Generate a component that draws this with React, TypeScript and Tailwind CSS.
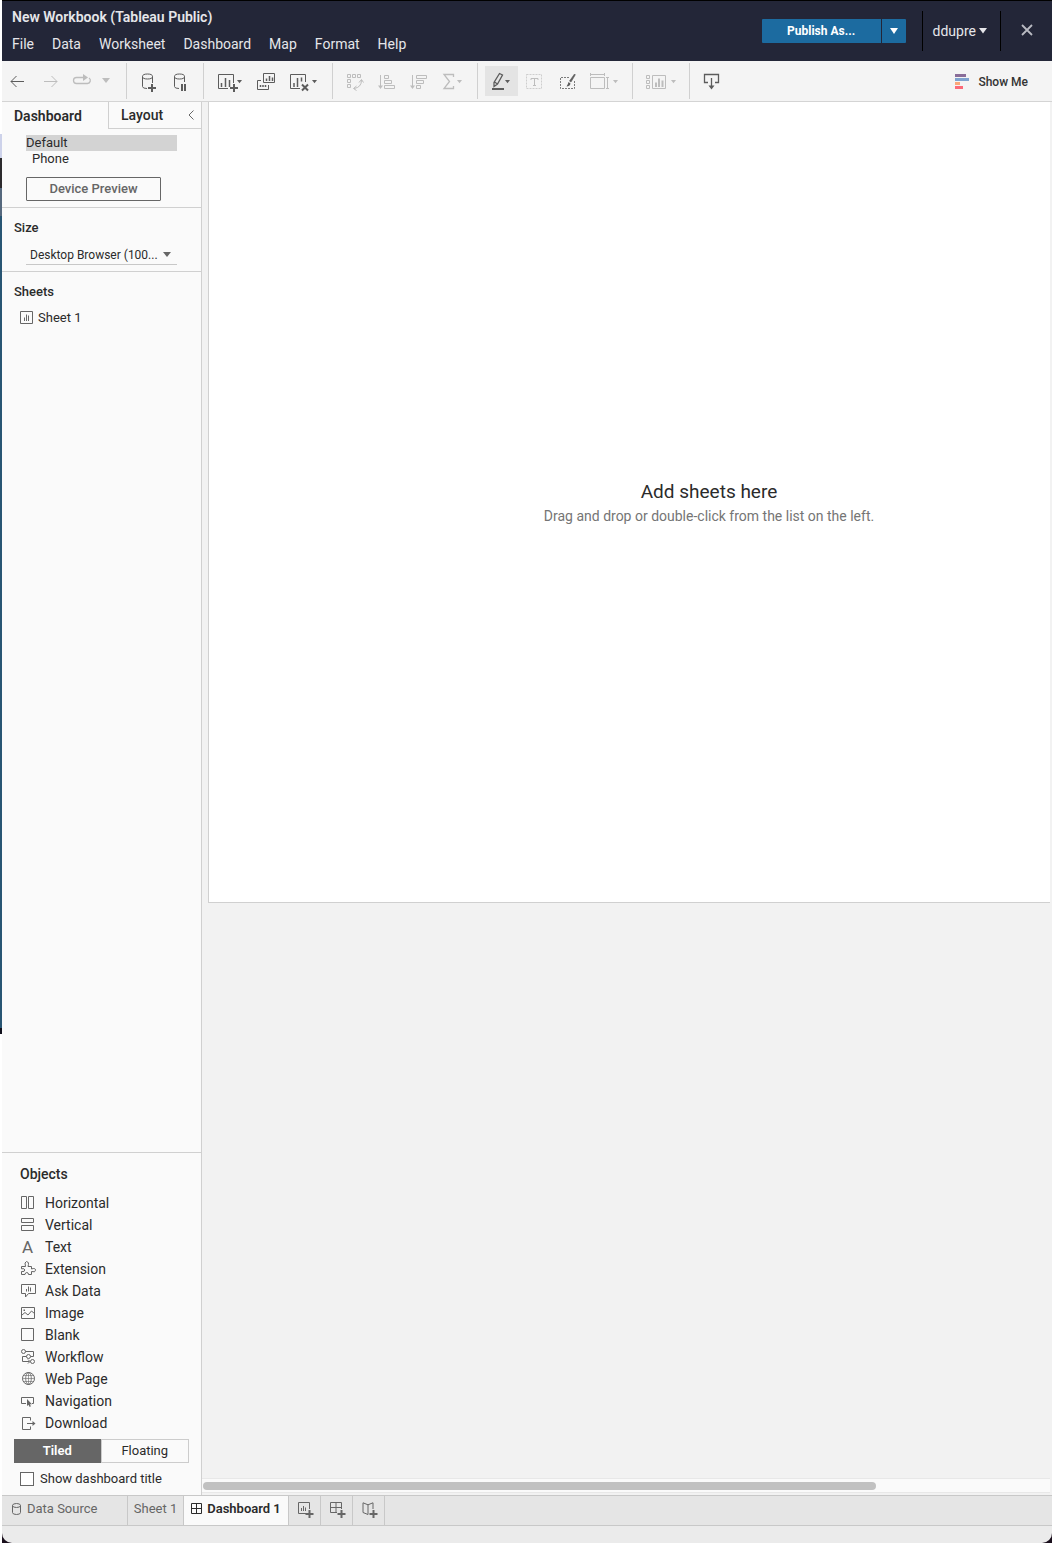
import React, { useState } from "react";

type IconProps = { w?: number; children: React.ReactNode; className?: string };

function Icon({ w = 32, children, className = "" }: IconProps) {
  return (
    <svg
      width={w}
      height={32}
      viewBox={`0 0 ${w} 32`}
      fill="none"
      stroke="currentColor"
      strokeWidth={1}
      aria-hidden="true"
      className={`shrink-0 ${className}`}
    >
      {children}
    </svg>
  );
}

function Caret({ x, y = 16 }: { x: number; y?: number }) {
  return <path d={`M${x} ${y}h5l-2.5 3.2z`} fill="currentColor" stroke="none" />;
}

function Plus({ x, y }: { x: number; y: number }) {
  return <path d={`M${x - 4} ${y}h8M${x} ${y - 4}v8`} strokeWidth={2} />;
}

function Tool({
  label,
  dim = false,
  w = 32,
  className = "",
  children,
}: {
  label: string;
  dim?: boolean;
  w?: number;
  className?: string;
  children: React.ReactNode;
}) {
  return (
    <button
      type="button"
      aria-label={label}
      title={label}
      disabled={dim}
      className={`flex h-[30px] shrink-0 items-center ${dim ? "text-[#bdbdbd]" : "text-[#5c5c5c]"} ${className}`}
    >
      <Icon w={w}>{children}</Icon>
    </button>
  );
}

function Separator() {
  return <div className="h-9 w-px shrink-0 bg-[#d0d0d0]" />;
}

function Header() {
  const menus = ["File", "Data", "Worksheet", "Dashboard", "Map", "Format", "Help"];
  return (
    <header className="flex h-[61px] items-start justify-between border-t border-black bg-[#232638] text-[#e6e6ea]">
      <div className="pl-2.5">
        <h1 className="mt-1.5 text-sm leading-5 font-semibold">New Workbook (Tableau Public)</h1>
        <nav className="mt-[7px] flex gap-[18px] text-sm leading-5">
          {menus.map((m) => (
            <button key={m} type="button">
              {m}
            </button>
          ))}
        </nav>
      </div>
      <div className="flex pt-2.5">
        <div className="mt-2 mr-4 flex h-6 gap-px text-white">
          <button type="button" className="w-[119px] rounded-l-[1px] bg-[#1c6ba0] text-xs font-bold">
            Publish As...
          </button>
          <button
            type="button"
            aria-label="More publish options"
            className="flex w-6 items-center justify-center rounded-r-[1px] bg-[#1c6ba0]"
          >
            <svg width="8" height="6" viewBox="0 0 8 6" fill="currentColor" aria-hidden="true">
              <path d="M0 0h8L4 6z" />
            </svg>
          </button>
        </div>
        <button
          type="button"
          className="flex h-10 items-center gap-[3px] border-x border-black pr-[13px] pl-2.5 text-sm"
        >
          ddupre
          <svg width="8" height="6" viewBox="0 0 8 6" fill="currentColor" aria-hidden="true">
            <path d="M0 0h8L4 5.500z" />
          </svg>
        </button>
        <button type="button" aria-label="Close" className="flex h-[37px] w-[51px] items-center justify-center text-[#b9bac2]">
          <svg width="12" height="12" viewBox="0 0 12 12" fill="none" stroke="currentColor" strokeWidth="1.8" aria-hidden="true">
            <path d="M1 1l10 10M11 1L1 11" />
          </svg>
        </button>
      </div>
    </header>
  );
}

function Toolbar() {
  return (
    <div
      role="toolbar"
      aria-label="Workbook tools"
      className="flex h-[41px] items-center border-b border-[#d4d4d4] bg-[#f4f4f4]"
    >
      <div className="flex items-center pr-3">
        <Tool label="Undo">
          <path d="M9 16.500H22M14.500 11l-5.500 5.500L14.500 22" />
        </Tool>
        <Tool label="Redo" dim>
          <path d="M10 16.500H23M17.500 11l5.500 5.500L17.500 22" />
        </Tool>
        <Tool label="Replay" dim>
          <path d="M18 12.500H10.500a3 3 0 0 0 0 6H21.500a3 3 0 0 0 1.500-5.500" strokeWidth={1.300} />
          <path d="M17 9l5 3.500L17 16z" fill="currentColor" stroke="none" />
        </Tool>
        <Tool label="Replay options" dim w={16}>
          <path d="M4 13h8l-4 5z" fill="currentColor" stroke="none" />
        </Tool>
      </div>
      <Separator />
      <div className="flex px-1.5">
        <Tool label="New data source">
          <ellipse cx="14.500" cy="11.500" rx="5" ry="2.500" />
          <path d="M9.500 11.500V21.500Q9.500 23.500 14 23.500M19.500 11.500V18" />
          <Plus x={19} y={23} />
        </Tool>
        <Tool label="Pause auto updates">
          <ellipse cx="14.500" cy="11.500" rx="5" ry="2.500" />
          <path d="M9.500 11.500V21.500Q9.500 23.500 14 23.500M19.500 11.500V17" />
          <path d="M17 19v7M20 19v7" strokeWidth={2} />
        </Tool>
      </div>
      <Separator />
      <div className="flex gap-1 px-2.5">
        <Tool label="New worksheet">
          <path d="M14 23.500H4.500V9.500H19.500V18" />
          <path d="M7.500 18v4M11.500 13v9M15.500 15v7" strokeWidth={1.500} />
          <Plus x={20} y={23} />
          <Caret x={23} y={15} />
        </Tool>
        <Tool label="Duplicate">
          <path d="M13.500 8.500H24.500V17.500H13.500zM11 15.500H7.500V24.500H18.500V20" />
          <path d="M16.500 13.500V16M19.500 11V16M22.500 12.500V16M10.500 20v2M13 20v2M15.500 20v2" strokeWidth={1.500} />
        </Tool>
        <Tool label="Clear sheet" w={36}>
          <path d="M14 23.500H4.500V9.500H19.500V17" />
          <path d="M8 18v4M11.500 13v9M15.500 12.500v4" strokeWidth={1.500} />
          <path d="M16 19.500l6 6M22 19.500l-6 6" strokeWidth={2} />
          <Caret x={26} y={15} />
        </Tool>
      </div>
      <Separator />
      <div className="flex px-1.5">
        <Tool label="Swap rows and columns" dim>
          <path d="M8.500 9.500h3v3h-3zM13.500 9.500h3v3h-3zM18.500 9.500h3v3h-3zM8.500 14.500h3v3h-3zM8.500 19.500h3v3h-3z" />
          <path d="M22.500 15Q22.500 22.500 15 23.500M20 17.500l2.500-3 2 3M17.500 21l-3 2.500 3 2" />
        </Tool>
        <Tool label="Sort ascending" dim>
          <path d="M9.500 10V23" />
          <path d="M7 20.500h5l-2.500 3.500z" fill="currentColor" stroke="none" />
          <path d="M13.500 10.500h4v3h-4zM13.500 15.500h7v3h-7zM13.500 20.500h10v3h-10z" />
        </Tool>
        <Tool label="Sort descending" dim>
          <path d="M9.500 10V23" />
          <path d="M7 20.500h5l-2.500 3.500z" fill="currentColor" stroke="none" />
          <path d="M13.500 10.500h10v3h-10zM13.500 15.500h7v3h-7zM13.500 20.500h4v3h-4z" />
        </Tool>
        <Tool label="Totals" dim w={36}>
          <path d="M18.500 12V9.500H9L14.500 16.500 9 23.500H18.500V21" strokeWidth={1.300} />
          <Caret x={22} y={15} />
        </Tool>
      </div>
      <Separator />
      <div className="flex gap-px px-[7px]">
        <Tool label="Highlight" className="w-[33px] bg-[#e4e4e4]">
          <path d="M7 24h12" strokeWidth={2} />
          <path d="M14.500 8.500l3 1.500-5 9-3.500 2.500v-4zM9.500 17l3 2" strokeWidth={1.300} />
          <Caret x={20} y={15} />
        </Tool>
        <Tool label="Show mark labels" dim>
          <path d="M7.500 9.500h15v14h-15z" strokeDasharray="2 1" opacity={0.700} />
          <path d="M12 15v-1.500h7V15M15.500 13.500v7M14 20.500h3" />
        </Tool>
        <Tool label="Format">
          <path d="M17 12.500H8.500V23.500H22.500V16" strokeDasharray="2 1" strokeWidth={0.800} />
          <path d="M22.500 9l.8.8-4.300 7.200-1.500-1z" fill="currentColor" strokeWidth={0.600} />
          <path d="M16.500 17l2 1.500q-.5 3-4 3 1.500-2 2-4.500z" fill="currentColor" stroke="none" />
        </Tool>
        <Tool label="Fit" dim w={40}>
          <path d="M5.500 12.500h14v11h-14zM5.500 9.500h14M5.500 8v3M19.500 8v3M22.500 12.500v11M21 12.500h3M21 23.500h3" />
          <Caret x={28} y={15} />
        </Tool>
      </div>
      <Separator />
      <div className="flex pr-1.5 pl-2.5">
        <Tool label="Show or hide cards" dim w={40}>
          <path d="M3.500 10.500h3v3h-3zM3.500 15.500h3v3h-3zM3.500 20.500h3v3h-3zM9.500 10.500h13v13h-13z" />
          <path d="M13 17.500v4.500M16 13.500v8.500M19.500 15.500v6.500" strokeWidth={2} />
          <Caret x={28} y={15} />
        </Tool>
      </div>
      <Separator />
      <div className="flex px-1.5">
        <Tool label="Download">
          <path d="M12 17.500H8.500V9.500H22.500V17.500H19M15.500 13V22" strokeWidth={1.300} />
          <path d="M12.500 20.500h6l-3 4z" fill="currentColor" stroke="none" />
        </Tool>
      </div>
      <button type="button" className="mt-px mr-6 ml-auto flex items-center gap-[9px] text-xs font-medium text-[#333]">
        <svg width="14" height="15" viewBox="0 0 14 15" aria-hidden="true">
          <path d="M0 0h11v3H0z" fill="#8a6d99" />
          <path d="M0 4h14v3H0z" fill="#7fa3cf" />
          <path d="M0 8h5v3H0z" fill="#fba77a" />
          <path d="M0 12h8v3H0z" fill="#fb6a78" />
        </svg>
        Show Me
      </button>
    </div>
  );
}

const objects: { name: string; icon: React.ReactNode }[] = [
  { name: "Horizontal", icon: <path d="M1.500 4.500h5v12h-5zM8.500 4.500h5v12h-5z" /> },
  { name: "Vertical", icon: <path d="M1.500 4.500h12v4h-12zM1.500 11.500h12v5h-12z" /> },
  {
    name: "Text",
    icon: (
      <text x="7.500" y="17" fontSize="17" textAnchor="middle" fill="currentColor" stroke="none">
        A
      </text>
    ),
  },
  {
    name: "Extension",
    icon: (
      <path d="M1.500 8.500h4Q4 4 6.500 3.500 9.500 4 8 8.500h3.500v2.500q4-1.500 4 1.200 0 2.500-4 1.300v3H8.500q0-2-1.700-2T5 16.500H1.500V13.500Q5 14 4.800 12 4.500 10 1.500 10.800z" />
    ),
  },
  {
    name: "Ask Data",
    icon: <path d="M1.500 4.500h14v9H8.500l-3 3.500v-3.500h-4zM6.500 9v2.500M8.500 6.500v5M10.500 7.500v4" />,
  },
  {
    name: "Image",
    icon: (
      <>
        <path d="M1.500 5.500h13v11h-13zM2 13l3-2.500 3 2.500 3.500-4 3 2.500" />
        <path d="M3.500 7.500h1.500v1.500H3.500z" fill="currentColor" stroke="none" />
      </>
    ),
  },
  { name: "Blank", icon: <path d="M1.500 4.500h12v12h-12z" /> },
  {
    name: "Workflow",
    icon: (
      <>
        <circle cx="3.500" cy="5.500" r="2" />
        <circle cx="8.500" cy="10.500" r="2" />
        <circle cx="12.500" cy="15.500" r="2" />
        <path d="M5.500 5.500h8v5h-3M6.500 10.500h-4v5h7M8 13.500l2 2-2 2" />
      </>
    ),
  },
  {
    name: "Web Page",
    icon: (
      <>
        <circle cx="8.500" cy="10.500" r="6" />
        <ellipse cx="8.500" cy="10.500" rx="2.800" ry="6" strokeWidth={0.800} />
        <path d="M2.500 10.500h12M8.500 4.500v12M3.500 7.500h10M3.500 13.500h10" strokeWidth={0.600} />
      </>
    ),
  },
  {
    name: "Navigation",
    icon: (
      <>
        <path d="M6 13.500H1.500v-6h12v6H12" />
        <path d="M7 9v7l1.500-1.300 1.200 2.300 1.200-.7-1-2.100h2.100z" fill="currentColor" stroke="none" />
      </>
    ),
  },
  {
    name: "Download",
    icon: (
      <>
        <path d="M10.500 8.500v-3h-8v12h8v-3M7 11.500h7" />
        <path d="M12.500 9l3 2.500-3 2.500z" fill="currentColor" stroke="none" />
      </>
    ),
  },
];

function Sidebar() {
  const [tiled, setTiled] = useState(true);
  return (
    <aside className="flex w-[200px] shrink-0 flex-col border-r border-[#d0d0d0] bg-[#fafafa] text-[13px] text-[#2b2b2b]">
      <div className="flex h-[27px] text-sm">
        <button type="button" className="w-[106px] pl-3 text-left font-semibold">
          Dashboard
        </button>
        <div className="flex flex-1 items-center justify-between border-b border-l border-[#d0d0d0] pr-[7px] pl-3">
          <button type="button" className="font-medium">
            Layout
          </button>
          <button type="button" aria-label="Collapse pane">
            <svg width="6" height="10" viewBox="0 0 6 10" fill="none" stroke="#666" aria-hidden="true">
              <path d="M5.500 .5L1 5l4.500 4.500" />
            </svg>
          </button>
        </div>
      </div>

      <section className="flex flex-col items-start border-b border-[#d0d0d0] pt-1.5 pb-1.5 pl-6 leading-4">
        <button type="button" className="w-[151px] bg-[#d3d3d3] text-left">
          Default
        </button>
        <button type="button" className="pl-1.5">
          Phone
        </button>
        <button
          type="button"
          className="mt-2.5 h-6 w-[135px] rounded-[1px] border border-[#666] font-medium text-[#666]"
        >
          Device Preview
        </button>
      </section>

      <section className="border-b border-[#d0d0d0] pt-3 pr-6 pb-1.5 pl-3">
        <label htmlFor="size" className="block leading-4 font-medium">
          Size
        </label>
        <div className="relative mt-2 ml-3 h-[21px] w-[151px] border-b border-[#c8c8c8]">
          <select
            id="size"
            className="h-full w-full appearance-none bg-transparent pt-px pl-1 text-xs outline-none"
          >
            <option>Desktop Browser (100...</option>
          </select>
          <svg className="pointer-events-none absolute top-2 right-1.5" width="8" height="5" viewBox="0 0 8 5" fill="#666" aria-hidden="true">
            <path d="M0 0h8L4 5z" />
          </svg>
        </div>
      </section>

      <section className="pt-3 pl-3 leading-4">
        <h2 className="font-medium">Sheets</h2>
        <button type="button" className="mt-2.5 ml-1.5 flex items-center gap-[5px]">
          <svg className="mb-0.5" width="13" height="13" viewBox="0 0 13 13" fill="none" stroke="#666" aria-hidden="true">
            <path d="M.5.5h12v12H.5zM4.500 6.500v3.500M6.500 3.500V10M8.500 4.500V10" />
          </svg>
          Sheet 1
        </button>
      </section>

      <section className="mt-auto border-t border-[#d0d0d0] pt-3 pb-2">
        <h2 className="pl-[18px] text-sm leading-[18px] font-medium">Objects</h2>
        <ul className="mt-2 pt-px pl-[18px] text-sm">
          {objects.map((o) => (
            <li key={o.name} className="flex h-[22px] items-center gap-[7px]">
              <svg
                width="18"
                height="22"
                viewBox="0 0 18 22"
                fill="none"
                stroke="currentColor"
                className="text-[#666]"
                aria-hidden="true"
              >
                {o.icon}
              </svg>
              {o.name}
            </li>
          ))}
        </ul>
        <div className="mx-3 mt-[5px] flex h-6">
          <button
            type="button"
            aria-pressed={tiled}
            onClick={() => setTiled(true)}
            className="flex-1 bg-[#666] font-semibold text-white"
          >
            Tiled
          </button>
          <button
            type="button"
            aria-pressed={!tiled}
            onClick={() => setTiled(false)}
            className="flex-1 border border-[#ccc]"
          >
            Floating
          </button>
        </div>
        <label className="mt-2 ml-[18px] flex items-center gap-1.5 leading-4">
          <input type="checkbox" className="size-3.5 appearance-none border border-[#666] bg-white" />
          Show dashboard title
        </label>
      </section>
    </aside>
  );
}

function Workspace() {
  return (
    <main className="flex min-w-0 flex-1 flex-col bg-[#f2f2f2]">
      <div className="mr-0.5 ml-1.5 flex-1 overflow-hidden">
        <div className="box-content flex h-[800px] w-[1000px] flex-col items-center justify-center border-b border-l border-[#d0d0d0] bg-white">
          <h2 className="text-[19px] leading-7 text-[#2b2b2b]">Add sheets here</h2>
          <p className="text-sm leading-5 text-[#757575]">
            Drag and drop or double-click from the list on the left.
          </p>
        </div>
      </div>
      <div className="mr-0.5 mb-0.5 flex h-[15px] items-center border-y border-[#e8e8e8] bg-[#fafafa] pl-px">
        <div className="h-2 w-[79.500%] rounded-full bg-[#c1c1c1]" />
      </div>
    </main>
  );
}

function SheetTabs() {
  const tab = "flex items-center border-r border-[#c8c8c8]";
  return (
    <nav className="flex h-[31px] border-y border-[#c8c8c8] bg-[#e5e5e5] text-[13px] leading-4 text-[#666]">
      <button type="button" className={`${tab} w-[126px] gap-1.5 pb-1 pl-2.5`}>
        <svg width="9" height="12" viewBox="0 0 9 12" fill="none" stroke="currentColor" aria-hidden="true">
          <ellipse cx="4.500" cy="2.500" rx="4" ry="2" />
          <path d="M.5 2.500v7q0 2 4 2t4-2v-7" />
        </svg>
        Data Source
      </button>
      <button type="button" className={`${tab} w-14 justify-center pb-1`}>
        Sheet 1
      </button>
      <button type="button" className={`${tab} w-[105px] justify-center gap-[5px] bg-[#fafafa] pb-1 font-semibold text-[#2b2b2b]`}>
        <svg width="11" height="11" viewBox="0 0 11 11" fill="none" stroke="currentColor" aria-hidden="true">
          <path d="M.5.5h10v10H.5zM5.500.5v10M.5 5.500h10" />
        </svg>
        Dashboard 1
      </button>
      <button type="button" aria-label="New worksheet" className={`${tab} w-8 justify-center pb-0.5 pl-0.5`}>
        <svg width="16" height="16" viewBox="0 0 16 16" fill="none" stroke="currentColor" aria-hidden="true">
          <path d="M8 11.500H.5V.5H11.500V7M3.500 6v3M5.500 4v5M7.500 5.500v3.500" />
          <path d="M7.500 12h8M11.500 8v8" strokeWidth={2} />
        </svg>
      </button>
      <button type="button" aria-label="New dashboard" className={`${tab} w-8 justify-center pb-0.5 pl-0.5`}>
        <svg width="16" height="16" viewBox="0 0 16 16" fill="none" stroke="currentColor" aria-hidden="true">
          <path d="M7 10.500H.5V.5H11.500V7M6 .5v10M.5 5.500h11" />
          <path d="M7.500 12h8M11.500 8v8" strokeWidth={2} />
        </svg>
      </button>
      <button type="button" aria-label="New story" className={`${tab} w-8 justify-center pb-0.5 pl-0.5`}>
        <svg width="16" height="16" viewBox="0 0 16 16" fill="none" stroke="currentColor" aria-hidden="true">
          <path d="M6 12.500L1 10.500V.8L6 2.800 11 .8V7M6 2.800v9.700" />
          <path d="M7.500 12h8M11.500 8v8" strokeWidth={2} />
        </svg>
      </button>
    </nav>
  );
}

export default function App() {
  return (
    <div className="flex min-h-screen bg-white font-['Roboto','Liberation_Sans',sans-serif]">
      <div className="flex w-0.5 shrink-0 flex-col">
        <div className="h-[134px]" />
        <div className="h-[24px] bg-[#cdd2ea]" />
        <div className="h-[30px] bg-[#2c2a2d]" />
        <div className="h-[28px] bg-[#55687d]" />
        <div className="h-[812px] bg-[#285573]" />
        <div className="h-1.5 bg-[#10101c]" />
      </div>
      <div className="flex min-w-0 flex-1 flex-col bg-[#1a0f1c]">
        <Header />
        <Toolbar />
        <div className="flex flex-1">
          <Sidebar />
          <Workspace />
        </div>
        <SheetTabs />
        <footer className="h-[17px] rounded-b-[10px] bg-[#ebebeb]" />
      </div>
    </div>
  );
}
